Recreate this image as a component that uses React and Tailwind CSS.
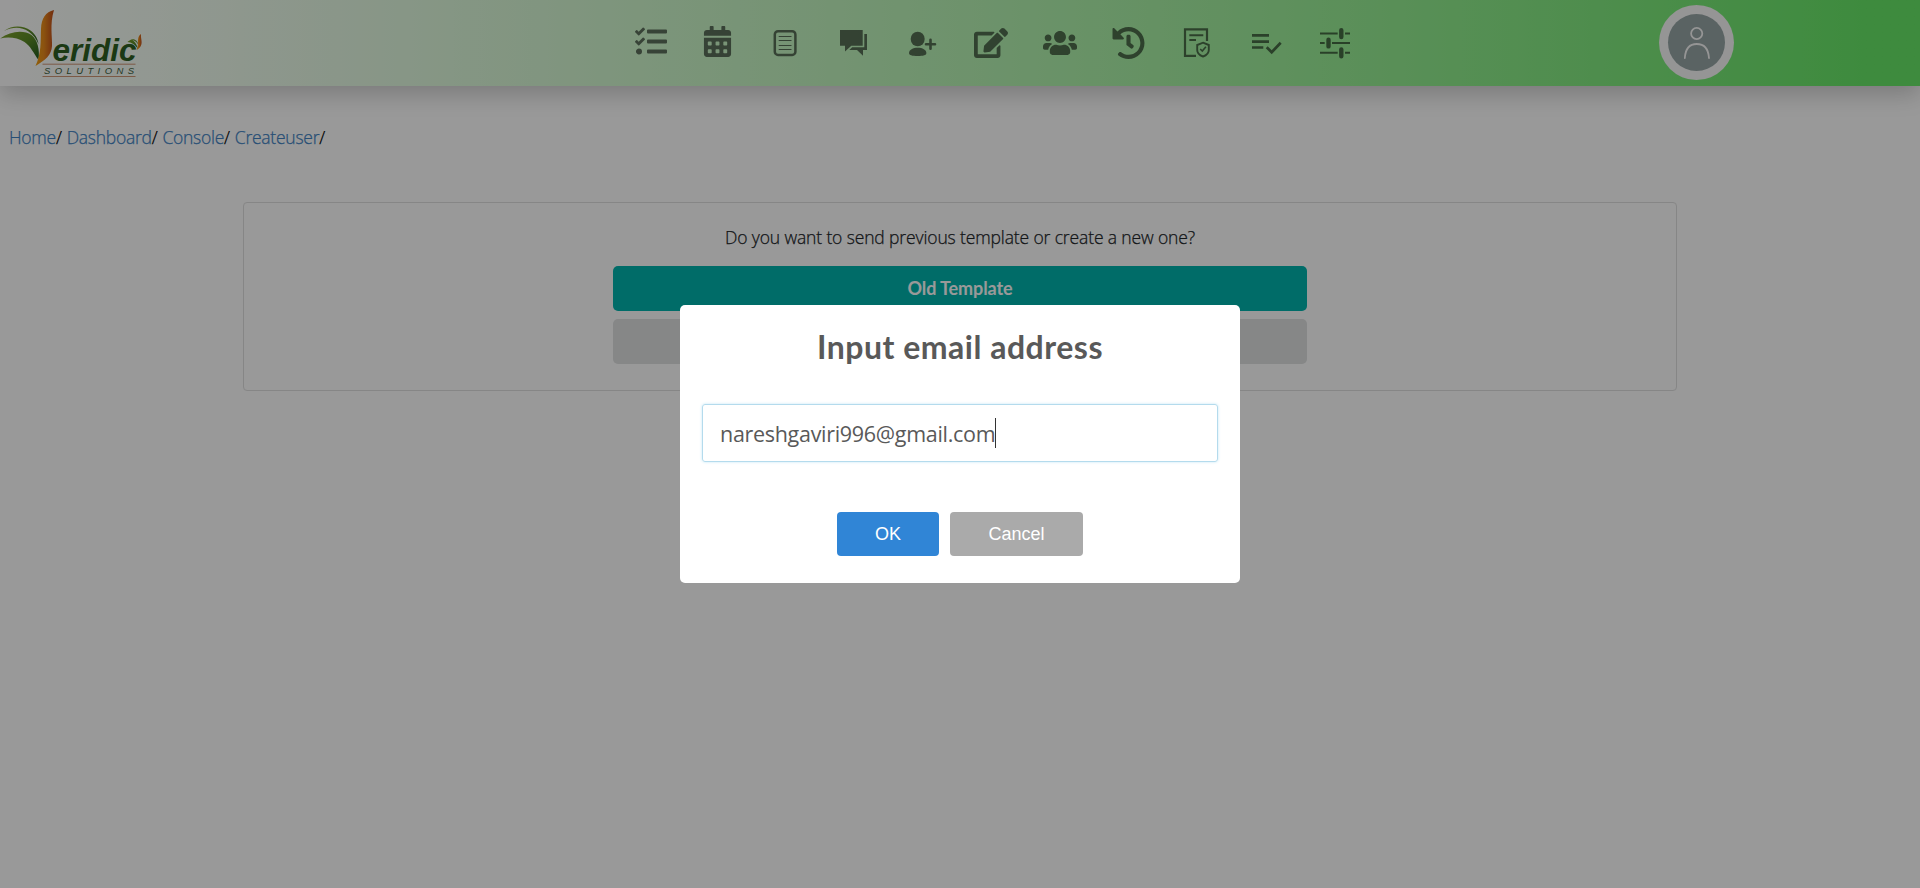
import React from "react";
import { FaTasks, FaCalendarAlt, FaEdit, FaUsers, FaHistory } from "react-icons/fa";

function Logo() {
  return (
    <svg className="h-[86px] w-[160px] shrink-0" viewBox="0.5 0 160 86">
      <defs>
        <linearGradient id="flame" x1="0" y1="0" x2="1" y2="0">
          <stop offset="0" stopColor="#f0a010" />
          <stop offset="0.45" stopColor="#e88a1c" />
          <stop offset="1" stopColor="#bd4a1c" />
        </linearGradient>
        <linearGradient id="leaf" x1="0" y1="0" x2="1" y2="1">
          <stop offset="0" stopColor="#7fa32c" />
          <stop offset="0.5" stopColor="#5c8a26" />
          <stop offset="1" stopColor="#1f5a20" />
        </linearGradient>
      </defs>
      <path d="M.7 38.4C11 31 24 29.500 32 35C38 39.500 40.500 50 39 60C34 53 31 46 25 42C18 37.500 9 36.500 .7 38.400Z" fill="url(#leaf)" />
      <path d="M4.500 31C13 24.500 24 25.500 31 30.500C35.500 34 38 38 39 44C36.500 38.500 33.500 34.500 29 31.500C22 27 14 26.500 4.500 31Z" fill="url(#leaf)" />
      <path d="M54.500 10C46 12 42 18 41.500 29C41 42 42 53 36 66C46 60 52 55 52.500 46C53 38 50 24 54.500 10Z" fill="url(#flame)" />
      <text x="53" y="61" textLength="84" lengthAdjust="spacingAndGlyphs" fill="#2d5f22" className="font-['Liberation_Sans',sans-serif] text-[32px] font-bold italic">eridic</text>
      <path d="M128 42C131 39 136 39.500 138.500 49C136 45 132 42 128 42ZM130 40.500C134 37.500 138 40 139 45C137 41 134 39.500 130 40.500Z" fill="url(#leaf)" />
      <path d="M141.500 34C138 36 138.500 41 138.500 44C138.500 46 138 48 137 50C141 48 142.500 45 142 41C141.700 38 141.300 37 141.500 34Z" fill="url(#flame)" />
      <path d="M43 64.200H136M43 76.500H136" stroke="#c98a66" strokeWidth="0.9" />
      <text x="44.500" y="73.800" textLength="90" fill="#3d6040" className="font-['Liberation_Sans',sans-serif] text-[9.5px] italic">SOLUTIONS</text>
    </svg>
  );
}

const ICONS = [
  ["630 23 40 40", <FaTasks x="635" y="25.500" size={32} />],
  ["698 23 40 40", <FaCalendarAlt x="702" y="26" size={31} />],
  [
    "766 23 40 40",
    <g fill="none" stroke="currentColor">
      <rect x="774.800" y="31.200" width="20.600" height="23.700" rx="3.200" strokeWidth="2.500" />
      <path d="M778.700 36.500h12.800M778.700 40.500h12.800M778.700 45.500h12.800M778.700 49.500h12.800" strokeWidth="1.200" />
    </g>,
  ],
  [
    "834 23 40 40",
    <path d="M840 30H862.700V45.700H851.300L845 51.500V45.700H840ZM864.300 34H867V50H863V55.700L857 50H849.300L852.200 47.300H864.300Z" fill="currentColor" />,
  ],
  [
    "902 23 40 40",
    <g fill="currentColor">
      <ellipse cx="917.700" cy="39" rx="7" ry="7.300" />
      <path d="M909 53c0-3.300 4-5.300 8.700-5.300s8.700 2 8.700 5.300c0 2.200-3 3-8.700 3s-8.700-.8-8.700-3Z" />
      <path d="M930.500 39.800v9M926 44.300h9" stroke="currentColor" strokeWidth="2.600" strokeLinecap="round" />
    </g>,
  ],
  ["970 23 40 40", <FaEdit x="974" y="26" size={34} />],
  ["1038 23 40 40", <FaUsers x="1043" y="26" size={34} />],
  ["1106 23 40 40", <FaHistory x="1112" y="26.500" size={33} />],
  [
    "1174 23 40 40",
    <g fill="none" stroke="currentColor">
      <path d="M1196 55.800H1185V29.300H1207V41" strokeWidth="2.200" />
      <path d="M1189.300 35.300h14M1189.300 40h6.700" strokeWidth="1.900" />
      <path d="M1203 42.700L1208.800 45V50C1208.800 53 1206 55.500 1203 56.500C1200 55.500 1197.200 53 1197.200 50V45Z" strokeWidth="1.900" />
      <path d="M1200.200 49l2.100 2.100 3.600-4.300" strokeWidth="1.600" />
    </g>,
  ],
  [
    "1242 23 40 40",
    <path d="M1252 35.400h17M1252 41.600h17M1252 47.500h11.300M1266.700 47.200l5 5 9-9.500" fill="none" stroke="currentColor" strokeWidth="2.700" />,
  ],
  [
    "1310 23 40 40",
    <g fill="none" stroke="currentColor">
      <path d="M1320 33.500h17.700M1345 33.500h5M1320 43h4.700M1332 43h18M1320 52.700h17.700M1345 52.700h5" strokeWidth="2.100" />
      <path d="M1341.300 30.200v6.900M1328.500 39.800v6.600M1341.300 49.500v6.700" strokeWidth="4.400" strokeLinecap="round" />
    </g>,
  ],
];

function Header() {
  return (
    <header className="flex h-[86px] items-center bg-linear-to-r from-[#fefefe] to-[#68e868] to-97% shadow-[0_8px_22px_rgba(0,0,0,0.2)]">
      <Logo />
      <nav className="ml-[470px] flex gap-7 text-black/55">
        {ICONS.map(([box, icon]) => (
          <a key={box} className="block">
            <svg className="block size-10" viewBox={box}>{icon}</svg>
          </a>
        ))}
      </nav>
      <div className="mb-px ml-[309px] flex size-[75px] items-center justify-center rounded-full bg-[#f8f8f8]">
        <svg className="size-[57px] rounded-full bg-[#96a5a5]" viewBox="0 0 57 57" fill="none" stroke="#f8f8f8" strokeWidth="1.800">
          <circle cx="28.700" cy="19.500" r="5.600" />
          <path d="M16.800 44C17.500 34 22 30 28.700 30S40.300 34 41 44" strokeLinecap="round" />
        </svg>
      </div>
    </header>
  );
}

const CRUMBS = ["Home", "Dashboard", "Console", "Createuser"];

function Modal() {
  return (
    <div className="fixed inset-0 flex items-center justify-center bg-black/40">
      <div className="flex h-[278px] w-[560px] flex-col items-center rounded-[5px] bg-white px-[22px] pt-[22px] text-[#595959]">
        <h2 className="h-10 font-[Lato,sans-serif] text-[32px] leading-10 font-bold tracking-[0.5px] whitespace-nowrap">Input email address</h2>
        <div className="mt-[37px] flex h-[58px] w-full items-center rounded-[3px] border border-[#b4dbed] px-[17px] pt-0.5 font-['Open_Sans',sans-serif] text-[21.500px] shadow-[0_0_3px_#c4e6f5]">
          <span className="inline-block tracking-[-0.3px] whitespace-nowrap">nareshgaviri996@gmail.com</span>
          <span className="-mt-0.5 h-[30px] w-px bg-[#333]" />
        </div>
        <div className="mt-[50px] flex gap-[11px] font-['Liberation_Sans',sans-serif] text-[18px] text-white">
          <button className="h-11 w-[102px] rounded-[4px] bg-[#3085d6]">OK</button>
          <button className="h-11 w-[133px] rounded-[4px] bg-[#aaaaaa]">Cancel</button>
        </div>
      </div>
    </div>
  );
}

export default function App() {
  return (
    <div className="h-[888px] overflow-hidden bg-white font-['Open_Sans',sans-serif] text-[18px] text-[#212529]">
      <Header />
      <div className="mt-[37px] ml-[9px] flex h-7 items-center gap-[5px] text-[17.500px] font-light tracking-[-0.25px] [-webkit-text-stroke:0.25px]">
        {CRUMBS.map((name) => (
          <span key={name} className="text-black">
            <a className="text-[#4183c4]">{name}</a>/
          </span>
        ))}
      </div>
      <main className="mx-auto mt-[51px] flex h-[189px] w-[1434px] flex-col items-center rounded-[4px] border border-[#dfdfdf] pt-[20px]">
        <p className="h-7 text-[17.500px] leading-7 font-light tracking-[-0.13px] whitespace-nowrap [-webkit-text-stroke:0.25px]">Do you want to send previous template or create a new one?</p>
        <button className="mt-[15px] h-[45px] w-[694px] shrink-0 rounded-[5px] bg-[#00b5ad] font-[Lato,sans-serif] text-[18px] font-bold tracking-[-0.1px] text-white">Old Template</button>
        <button className="mt-2 h-[45px] w-[694px] shrink-0 rounded-[5px] bg-[#e0e1e2] font-[Lato,sans-serif] font-bold text-[#5a5a5a]"></button>
      </main>
      <Modal />
    </div>
  );
}
